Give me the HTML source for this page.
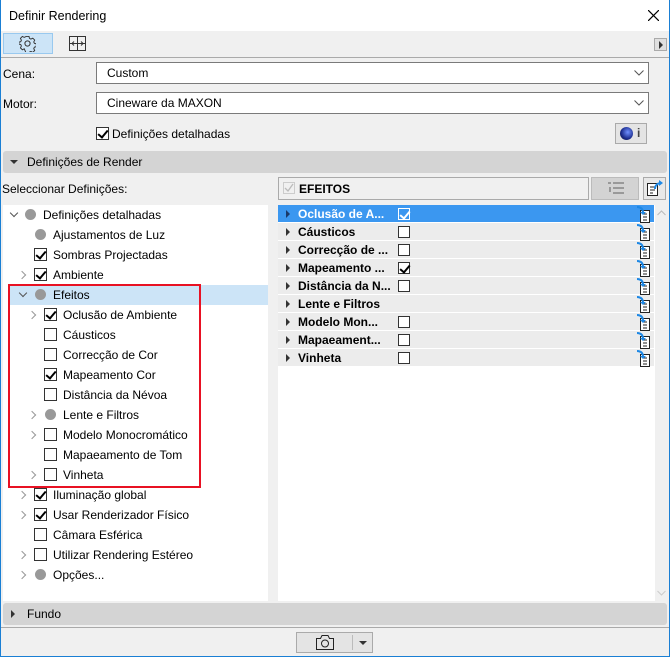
<!DOCTYPE html>
<html><head><meta charset="utf-8"><style>
*{box-sizing:border-box;margin:0;padding:0}
body{width:670px;height:657px;overflow:hidden;background:#f0f0f0;font-family:"Liberation Sans",sans-serif;font-size:12px;color:#000;position:relative}
.a{position:absolute}
.win{left:0;top:0;width:670px;height:657px;border:1px solid #1a7fd4;border-top:none}
.cb{position:absolute;width:13px;height:13px;border:1px solid #333;background:#fff}
.cb.on::after{content:"";position:absolute;left:3px;top:0px;width:4px;height:8px;border:solid #000;border-width:0 2px 2px 0;transform:rotate(40deg)}
.dot{position:absolute;width:11px;height:11px;border-radius:50%;background:#999}
.chv{position:absolute;width:6px;height:6px;border:solid #999;border-width:0 1.5px 1.5px 0;transform:rotate(-45deg)}
.chd{position:absolute;width:6px;height:6px;border:solid #555;border-width:0 1.5px 1.5px 0;transform:rotate(45deg)}
.t{position:absolute;white-space:nowrap;line-height:14px}
.row{position:absolute;left:278px;width:376px;height:18px;border-bottom:1px solid #fff;background:#ececec}
.row .t{font-weight:bold;left:20px;top:2px}
.row .tri{position:absolute;left:8px;top:5px;width:0;height:0;border-left:4px solid #333;border-top:4px solid transparent;border-bottom:4px solid transparent}
.row .cb{left:120px;top:3px;width:12px;height:12px}
.row svg{position:absolute;left:358px;top:0}
</style></head><body>
<div class="a" style="left:0;top:0;width:670px;height:31px;background:#fff"></div>
<div class="t" style="left:9px;top:9px;font-size:12.5px">Definir Rendering</div>
<svg class="a" style="left:648px;top:10px" width="11" height="11"><path d="M0 0L11 11M11 0L0 11" stroke="#000" stroke-width="1.2"/></svg>
<!-- toolbar -->
<div class="a" style="left:3px;top:33px;width:50px;height:21px;background:#cce4f7;border:1px solid #99c9ef"></div>
<svg class="a" style="left:19px;top:35px" width="17" height="17" viewBox="0 0 17 17"><path d="M7 1h3l.5 2 1.5.8 2-1 2 2-1 2 .7 1.5 2 .5v3l-2 .5-.7 1.5 1 2-2 2-2-1-1.5.7-.5 2H7l-.5-2L5 14l-2 1-2-2 1-2-.7-1.5-2-.5V7l2-.5L2 5 1 3l2-2 2 1 1.5-.7z" fill="none" stroke="#333" transform="translate(.5 .5) scale(.95)"/><circle cx="8.5" cy="8.5" r="2.6" fill="none" stroke="#333"/></svg>
<svg class="a" style="left:69px;top:36px" width="17" height="15"><rect x=".5" y=".5" width="16" height="14" fill="none" stroke="#333"/><path d="M8.5 1v13M1 7.5h15" stroke="#333"/><path d="M3 7.5l2-2M3 7.5l2 2M14 7.5l-2-2M14 7.5l-2 2" stroke="#333"/></svg>
<div class="a" style="left:654px;top:38px;width:13px;height:13px;border:1px solid #aaa;background:#e0e0e0"></div>
<div class="a" style="left:659px;top:41px;border-left:4px solid #333;border-top:4px solid transparent;border-bottom:4px solid transparent"></div>
<div class="a" style="left:0;top:57px;width:670px;height:1px;background:#aaa"></div>
<!-- form -->
<div class="t" style="left:3px;top:67px">Cena:</div>
<div class="a" style="left:96px;top:62px;width:553px;height:22px;border:1px solid #7a7a7a;background:#fff"></div>
<div class="t" style="left:107px;top:66px">Custom</div>
<div class="t" style="left:3px;top:97px">Motor:</div>
<div class="a" style="left:96px;top:92px;width:553px;height:22px;border:1px solid #7a7a7a;background:#fff"></div>
<div class="t" style="left:107px;top:96px">Cineware da MAXON</div>
<svg class="a" style="left:634px;top:70px" width="10" height="6"><path d="M.5.5l4.5 4.5 4.5-4.5" fill="none" stroke="#555"/></svg>
<svg class="a" style="left:634px;top:100px" width="10" height="6"><path d="M.5.5l4.5 4.5 4.5-4.5" fill="none" stroke="#555"/></svg>
<div class="cb on" style="left:96px;top:127px"></div>
<div class="t" style="left:112px;top:127px">Definições detalhadas</div>
<div class="a" style="left:615px;top:123px;width:32px;height:21px;border:1px solid #aaa;background:#e4e4e4"></div>
<div class="a" style="left:620px;top:127px;width:13px;height:13px;border-radius:50%;background:radial-gradient(circle at 60% 40%,#7090ff,#1a2a8a 60%,#222)"></div>
<div class="t" style="left:637px;top:126px;color:#444;font-weight:bold">i</div>
<!-- section -->
<div class="a" style="left:3px;top:151px;width:664px;height:22px;background:#d4d4d4;border-radius:3px"></div>
<div class="a" style="left:10px;top:160px;border-top:4px solid #333;border-left:4px solid transparent;border-right:4px solid transparent"></div>
<div class="t" style="left:27px;top:155px">Definições de Render</div>
<div class="t" style="left:2px;top:182px">Seleccionar Definições:</div>
<div class="a" style="left:278px;top:177px;width:311px;height:23px;border:1px solid #aaa;background:#f0f0f0"></div>
<svg class="a" style="left:283px;top:182px" width="12" height="12"><rect x=".5" y=".5" width="11" height="11" fill="none" stroke="#ccc"/><path d="M2 6l3 3 5-7" fill="none" stroke="#bbb" stroke-width="1.3"/></svg>
<div class="t" style="left:299px;top:182px;font-weight:bold">EFEITOS</div>
<div class="a" style="left:591px;top:177px;width:48px;height:23px;border:1px solid #bbb;background:#d3d3d3"></div>
<svg class="a" style="left:607px;top:182px" width="18" height="13"><path d="M1 1h3M6 1h11M3 5v5M6 6h11M6 11h11" stroke="#999" stroke-width="2"/></svg>
<div class="a" style="left:643px;top:177px;width:23px;height:23px;border:1px solid #aaa;background:#e8e8e8"></div>
<svg class="a" style="left:646px;top:180px" width="18" height="17"><rect x="1.5" y="3.5" width="10" height="12" fill="#fff" stroke="#222"/><path d="M4 7h5M4 10h5M4 13h3" stroke="#222"/><path d="M9 9c0-4 3-6 6-6" fill="none" stroke="#1e88e5" stroke-width="2"/><path d="M13 0l4 3-4 3z" fill="#1e88e5"/></svg>
<!-- left tree -->
<div class="a" style="left:3px;top:205px;width:265px;height:396px;background:#fff"></div>
<div class="a" style="left:8px;top:285px;width:260px;height:20px;background:#cce4f7"></div>
<div class="chd" style="left:11px;top:210px"></div><div class="dot" style="left:25px;top:209px"></div><div class="t" style="left:43px;top:208px">Definições detalhadas</div>
<div class="dot" style="left:35px;top:229px"></div><div class="t" style="left:53px;top:228px">Ajustamentos de Luz</div>
<div class="cb on" style="left:34px;top:248px"></div><div class="t" style="left:53px;top:248px">Sombras Projectadas</div>
<div class="chv" style="left:19px;top:272px"></div><div class="cb on" style="left:34px;top:268px"></div><div class="t" style="left:53px;top:268px">Ambiente</div>
<div class="chd" style="left:20px;top:290px"></div><div class="dot" style="left:35px;top:289px"></div><div class="t" style="left:53px;top:288px">Efeitos</div>
<div class="chv" style="left:29px;top:312px"></div><div class="cb on" style="left:44px;top:308px"></div><div class="t" style="left:63px;top:308px">Oclusão de Ambiente</div>
<div class="cb" style="left:44px;top:328px"></div><div class="t" style="left:63px;top:328px">Cáusticos</div>
<div class="cb" style="left:44px;top:348px"></div><div class="t" style="left:63px;top:348px">Correcção de Cor</div>
<div class="cb on" style="left:44px;top:368px"></div><div class="t" style="left:63px;top:368px">Mapeamento Cor</div>
<div class="cb" style="left:44px;top:388px"></div><div class="t" style="left:63px;top:388px">Distância da Névoa</div>
<div class="chv" style="left:29px;top:412px"></div><div class="dot" style="left:45px;top:409px"></div><div class="t" style="left:63px;top:408px">Lente e Filtros</div>
<div class="chv" style="left:29px;top:432px"></div><div class="cb" style="left:44px;top:428px"></div><div class="t" style="left:63px;top:428px">Modelo Monocromático</div>
<div class="cb" style="left:44px;top:448px"></div><div class="t" style="left:63px;top:448px">Mapaeamento de Tom</div>
<div class="chv" style="left:29px;top:472px"></div><div class="cb" style="left:44px;top:468px"></div><div class="t" style="left:63px;top:468px">Vinheta</div>
<div class="chv" style="left:19px;top:492px"></div><div class="cb on" style="left:34px;top:488px"></div><div class="t" style="left:53px;top:488px">Iluminação global</div>
<div class="chv" style="left:19px;top:512px"></div><div class="cb on" style="left:34px;top:508px"></div><div class="t" style="left:53px;top:508px">Usar Renderizador Físico</div>
<div class="cb" style="left:34px;top:528px"></div><div class="t" style="left:53px;top:528px">Câmara Esférica</div>
<div class="chv" style="left:19px;top:552px"></div><div class="cb" style="left:34px;top:548px"></div><div class="t" style="left:53px;top:548px">Utilizar Rendering Estéreo</div>
<div class="chv" style="left:19px;top:572px"></div><div class="dot" style="left:35px;top:569px"></div><div class="t" style="left:53px;top:568px">Opções...</div>
<div class="a" style="left:8px;top:284px;width:193px;height:204px;border:2px solid #e81123"></div>
<!-- right list -->
<div class="a" style="left:278px;top:205px;width:377px;height:396px;background:#fff"></div>
<div class="a" style="left:655px;top:205px;width:12px;height:396px;background:#f0f0f0"></div>
<svg class="a" style="left:657px;top:210px" width="9" height="6"><path d="M.5 5l4-4 4 4" fill="none" stroke="#bbb"/></svg>
<svg class="a" style="left:657px;top:590px" width="9" height="6"><path d="M.5 1l4 4 4-4" fill="none" stroke="#ccc"/></svg>
<div id="rows"></div>
<!-- bottom -->
<div class="a" style="left:3px;top:603px;width:664px;height:22px;background:#d4d4d4;border-radius:3px"></div>
<div class="a" style="left:11px;top:610px;border-left:4px solid #333;border-top:4px solid transparent;border-bottom:4px solid transparent"></div>
<div class="t" style="left:27px;top:607px">Fundo</div>
<div class="a" style="left:0;top:627px;width:670px;height:1px;background:#aaa"></div>
<div class="a" style="left:296px;top:632px;width:77px;height:21px;border:1px solid #aaa;background:#e4e4e4"></div>
<svg class="a" style="left:315px;top:634px" width="20" height="17"><path d="M1.5 4.5h4l1.5-3h6l1.5 3h4v11h-17z" fill="none" stroke="#222"/><circle cx="10" cy="9.5" r="3.5" fill="none" stroke="#222"/></svg>
<div class="a" style="left:352px;top:635px;width:1px;height:15px;background:#bbb"></div>
<div class="a" style="left:359px;top:641px;border-top:4px solid #333;border-left:4px solid transparent;border-right:4px solid transparent"></div>
<div class="a win"></div>
<script>
var r=[["Oclusão de A...",2],["Cáusticos",0],["Correcção de ...",0],["Mapeamento ...",1],["Distância da N...",0],["Lente e Filtros",-1],["Modelo Mon...",0],["Mapaeament...",0],["Vinheta",0]];
var ic='<svg width="16" height="18"><rect x="4.5" y="5.5" width="9" height="12" fill="#fff" stroke="#222"/><path d="M7 9h4M7 12h4M7 15h4" stroke="#222"/><path d="M1 2c4 0 6 2 6 6" fill="none" stroke="#1e88e5" stroke-width="2"/><path d="M4 7l3 3 3-3z" fill="#1e88e5"/></svg>';
var h='';r.forEach(function(x,i){var s=i==0;
h+='<div class="row" style="top:'+(205+i*18)+'px;'+(s?'background:#3b97f0;color:#fff':'')+'"><div class="tri" style="'+(s?'border-left-color:#1a3a6a':'')+'"></div><div class="t">'+x[0]+'</div>'+(x[1]>=0?'<div class="cb'+(x[1]>0?' on':'')+'" style="'+(s?'background:#3b97f0;border-color:#fff':'')+'"></div>':'')+ic+'</div>';});
document.getElementById('rows').innerHTML=h;
</script>
<style>.row:first-child .cb.on::after{border-color:#fff}</style>
</body></html>
